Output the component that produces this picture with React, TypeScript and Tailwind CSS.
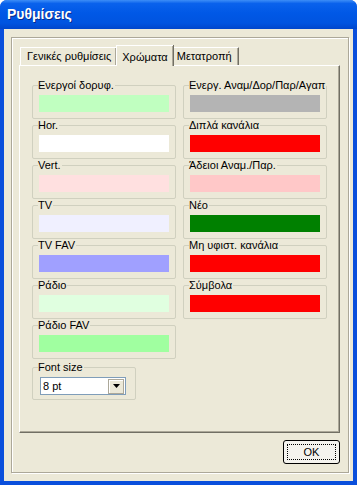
import React from "react";

type Swatch = { label: string; bg: string };

const leftColors: Swatch[] = [
  { label: "Ενεργοί δορυφ.", bg: "bg-[#C0FFC0]" },
  { label: "Hor.", bg: "bg-[#FFFFFF]" },
  { label: "Vert.", bg: "bg-[#FFE0E0]" },
  { label: "TV", bg: "bg-[#F0F0FF]" },
  { label: "TV FAV", bg: "bg-[#A0A0FF]" },
  { label: "Ράδιο", bg: "bg-[#E0FFE0]" },
  { label: "Ράδιο FAV", bg: "bg-[#A0FFA0]" },
];

const rightColors: Swatch[] = [
  { label: "Ενεργ. Αναμ/Δορ/Παρ/Αγαπ", bg: "bg-[#B4B4B4]" },
  { label: "Διπλά κανάλια", bg: "bg-[#FF0000]" },
  { label: "Άδειοι Αναμ./Παρ.", bg: "bg-[#FFC8C8]" },
  { label: "Νέο", bg: "bg-[#008000]" },
  { label: "Μη υφιστ. κανάλια", bg: "bg-[#FF0000]" },
  { label: "Σύμβολα", bg: "bg-[#FF0000]" },
];

function GroupBox({ label, className, children }: { label: string; className: string; children: React.ReactNode }) {
  return (
    <div className={`relative shrink-0 rounded-[2px] border border-[#D0D0BF] ${className}`}>
      <span className="absolute left-[5px] top-[-7px] whitespace-nowrap bg-[#ECE9D8] pr-[1px] leading-[13px]">{label}</span>
      {children}
    </div>
  );
}

function ColorGroup({ s }: { s: Swatch }) {
  return (
    <GroupBox label={s.label} className="h-[34px] w-[144px] px-[6px] pt-[9px]">
      <div className={`h-[17px] ${s.bg}`} />
    </GroupBox>
  );
}

export default function App() {
  return (
    <div
      className="flex h-[485px] w-[357px] flex-col overflow-hidden rounded-t-[7px] bg-[#0A4FDC] text-[11px] text-black"
      style={{ fontFamily: '"Liberation Sans", Arial, sans-serif' }}
    >
      {/* title bar */}
      <div className="flex h-[29px] shrink-0 items-center bg-[linear-gradient(180deg,#3D8EF7_0%,#0A62EC_12%,#0058E6_45%,#0054E0_80%,#0046CC_100%)] pl-[7px]">
        <span className="text-[14px] font-bold text-white [text-shadow:1px_1px_0_#0A2A8A]">Ρυθμίσεις</span>
      </div>

      {/* client area */}
      <div className="mx-[4px] mb-[4px] flex-1 bg-[#ECE9D8] pb-[8px] pl-[7px] pr-[4px] pt-[8px]">
        <div className="flex h-full flex-col border border-[#ACA899] shadow-[inset_1px_1px_0_#FFFFFF,1px_1px_0_#FFFFFF] pl-[7px] pr-[8px] pt-[7px]">
          {/* tabs */}
          <div className="flex h-[20px] items-end pl-[1px]">
            <div className="flex h-[18px] items-center border-l border-t border-white pl-[6px] pr-[5px] shadow-[inset_-1px_0_0_#ACA899]">
              Γενικές ρυθμίσεις
            </div>
            <div className="relative z-10 -mb-[1px] flex h-[21px] items-start border-l border-t border-white bg-[#ECE9D8] pl-[5px] pr-[5px] pt-[3px] shadow-[inset_-1px_0_0_#ACA899,1px_0_0_#716F64]">
              Χρώματα
            </div>
            <div className="ml-[1px] flex h-[18px] items-center border-r border-t border-t-white border-r-[#716F64] pl-[3px] pr-[6px] shadow-[inset_-1px_0_0_#ACA899]">
              Μετατροπή
            </div>
          </div>

          {/* tab page */}
          <div className="flex h-[368px] border-b border-l border-r border-t border-b-[#716F64] border-l-white border-r-[#716F64] border-t-white pl-[12px] pt-[19px] shadow-[inset_-1px_-1px_0_#ACA899]">
            <div className="flex flex-col gap-[6px]">
              {leftColors.map((s) => (
                <ColorGroup key={s.label} s={s} />
              ))}
              <GroupBox label="Font size" className="mt-[2px] h-[33px] w-[104px] pl-[7px] pt-[9px]">
                <div className="flex h-[18px] w-[86px] items-center border border-[#7F9DB9] bg-white pl-[2px]">
                  <span className="flex-1">8 pt</span>
                  <div className="mr-[1px] flex h-[15px] w-[16px] items-center justify-center border border-[#ACA899] bg-[#ECE9D8] shadow-[inset_1px_1px_0_#FFFFFF]">
                    <svg width="7" height="4" viewBox="0 0 7 4">
                      <path d="M0 0h7L3.5 4z" fill="#000" />
                    </svg>
                  </div>
                </div>
              </GroupBox>
            </div>
            <div className="ml-[7px] flex flex-col gap-[6px]">
              {rightColors.map((s) => (
                <ColorGroup key={s.label} s={s} />
              ))}
            </div>
          </div>

          {/* buttons */}
          <div className="mt-[7px] flex justify-end">
            <button className="flex h-[24px] w-[57px] items-center justify-center rounded-[3px] border border-black bg-[#F4F3EE] p-[3px]">
              <span className="flex h-full w-full items-center justify-center border border-dotted border-black">OK</span>
            </button>
          </div>
        </div>
      </div>
    </div>
  );
}
